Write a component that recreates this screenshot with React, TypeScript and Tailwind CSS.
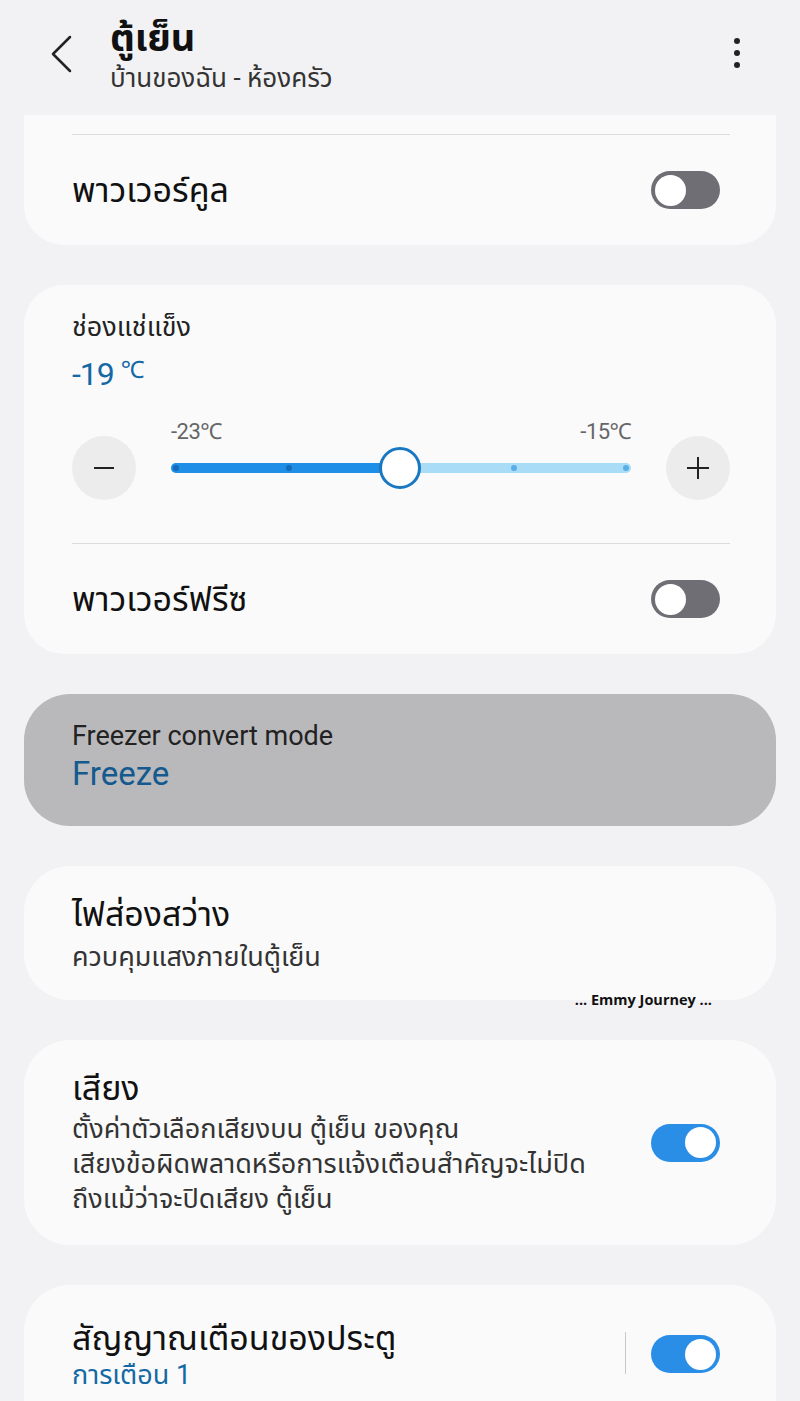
import React from "react";

const font = { fontFamily: '"Roboto", "Noto Sans", "Noto Sans Thai", "DejaVu Sans", sans-serif' };

function Toggle({ on }: { on: boolean }) {
  return on ? (
    <div className="w-[69px] h-[38px] rounded-full bg-[#2a8ee6] flex items-center justify-end pr-[4px] shrink-0">
      <div className="w-[31px] h-[31px] rounded-full bg-white" />
    </div>
  ) : (
    <div className="w-[69px] h-[38px] rounded-full bg-[#6e6e74] flex items-center justify-start pl-[4px] shrink-0">
      <div className="w-[31px] h-[31px] rounded-full bg-white" />
    </div>
  );
}

function Slider() {
  return (
    <div className="flex items-center gap-[35px]">
      <div className="w-[64px] h-[64px] rounded-full bg-[#ececed] flex items-center justify-center shrink-0">
        <div className="w-[20px] h-[2px] bg-[#222]" />
      </div>
      <div className="flex-1 flex flex-col">
        <div className="flex justify-between text-[22px] text-[#666] leading-none -mt-[42px] mb-[20px] tracking-[-0.5px]">
          <span>-23℃</span>
          <span>-15℃</span>
        </div>
        <div className="relative h-[10px] rounded-full bg-[#a9dcf7]">
          <div className="absolute left-0 top-0 h-[10px] w-[230px] rounded-full bg-[#1f8ee6]" />
          <div className="absolute left-[2px] top-[2px] w-[6px] h-[6px] rounded-full bg-[#136cb8]" />
          <div className="absolute left-[115px] top-[2px] w-[6px] h-[6px] rounded-full bg-[#136cb8]" />
          <div className="absolute left-[340px] top-[2px] w-[6px] h-[6px] rounded-full bg-[#5aaee8]" />
          <div className="absolute right-[2px] top-[2px] w-[6px] h-[6px] rounded-full bg-[#5aaee8]" />
          <div className="absolute left-[208px] top-[-16px] w-[42px] h-[42px] rounded-full bg-white border-[3px] border-[#1a78c2]" />
        </div>
      </div>
      <div className="w-[64px] h-[64px] rounded-full bg-[#ececed] flex items-center justify-center shrink-0 relative">
        <div className="absolute w-[22px] h-[2px] bg-[#222]" />
        <div className="absolute w-[2px] h-[22px] bg-[#222]" />
      </div>
    </div>
  );
}

export default function App() {
  return (
    <div className="w-[800px] h-[1401px] bg-[#f2f2f4] overflow-hidden" style={font}>
      {/* header */}
      <div className="h-[115px] flex items-start pl-[48px] pr-[60px] pt-[16px]">
        <svg width="28" height="40" viewBox="0 0 28 40" className="mt-[18px]">
          <path d="M22 3 L5 20 L22 37" stroke="#222" strokeWidth="2.5" fill="none" strokeLinecap="round" strokeLinejoin="round" />
        </svg>
        <div className="ml-[34px] flex flex-col">
          <div className="text-[38px] font-bold text-[#111] leading-[44px]">ตู้เย็น</div>
          <div className="text-[26px] text-[#333] leading-[32px] mt-[2px]">บ้านของฉัน - ห้องครัว</div>
        </div>
        <div className="ml-auto flex flex-col gap-[6px] mt-[22px]">
          <div className="w-[6px] h-[6px] rounded-full bg-[#222]" />
          <div className="w-[6px] h-[6px] rounded-full bg-[#222]" />
          <div className="w-[6px] h-[6px] rounded-full bg-[#222]" />
        </div>
      </div>

      <div className="px-[24px] flex flex-col gap-[40px]">
        {/* card 1 */}
        <div className="bg-[#fafafb] rounded-b-[40px] pl-[48px] pr-[56px] pt-[19px]">
          <div className="h-px bg-[#dcdcde] mr-[-10px]" />
          <div className="flex items-center justify-between h-[110px]">
            <div className="text-[34px] text-[#111] leading-[44px]">พาวเวอร์คูล</div>
            <Toggle on={false} />
          </div>
        </div>

        {/* card 2 */}
        <div className="bg-[#fafafb] rounded-[40px] pl-[48px] pr-[46px] pt-[26px]">
          <div className="text-[27px] text-[#222] leading-[32px]">ช่องแช่แข็ง</div>
          <div className="text-[32px] text-[#1469a4] leading-[36px] mt-[13px] tracking-[-1px]">-19 <span className="text-[24px] align-top leading-[28px]">℃</span></div>
          <div className="mt-[44px]"><Slider /></div>
          <div className="h-px bg-[#dcdcde] mt-[43px]" />
          <div className="flex items-center justify-between h-[110px] pr-[10px]">
            <div className="text-[34px] text-[#111] leading-[44px]">พาวเวอร์ฟรีซ</div>
            <Toggle on={false} />
          </div>
        </div>

        {/* card 3 */}
        <div className="bg-[#b9b9bb] rounded-[46px] px-[48px] pt-[26px] h-[132px]">
          <div className="text-[27px] text-[#222] leading-[32px]">Freezer convert mode</div>
          <div className="text-[33px] text-[#155a8e] leading-[44px]">Freeze</div>
        </div>

        {/* card 4 */}
        <div className="relative bg-[#fafafb] rounded-[46px] px-[48px] pt-[26px] h-[134px]">
          <div className="text-[34px] text-[#111] leading-[44px]">ไฟส่องสว่าง</div>
          <div className="text-[27px] text-[#333] leading-[34px] mt-[4px]">ควบคุมแสงภายในตู้เย็น</div>
          <div className="absolute right-[64px] bottom-[-9px] text-[14.5px] leading-[18px] font-bold text-[#111]" style={{ fontFamily: '"Open Sans", sans-serif' }}>... Emmy Journey ...</div>
        </div>

        {/* card 5 */}
        <div className="bg-[#fafafb] rounded-[46px] pl-[48px] pr-[56px] h-[205px] flex items-center">
          <div className="flex-1 self-start pt-[26px]">
            <div className="text-[34px] text-[#111] leading-[44px]">เสียง</div>
            <div className="text-[27px] text-[#333] leading-[35px] mt-[2px]">
              ตั้งค่าตัวเลือกเสียงบน ตู้เย็น ของคุณ<br />
              เสียงข้อผิดพลาดหรือการแจ้งเตือนสำคัญจะไม่ปิด<br />
              ถึงแม้ว่าจะปิดเสียง ตู้เย็น
            </div>
          </div>
          <Toggle on={true} />
        </div>

        {/* card 6 */}
        <div className="bg-[#fafafb] rounded-t-[46px] pl-[48px] pr-[56px] pt-[31px] h-[140px] flex items-start">
          <div className="flex-1">
            <div className="text-[34px] text-[#111] leading-[44px]">สัญญาณเตือนของประตู</div>
            <div className="text-[27px] text-[#1469a4] leading-[30px]">การเตือน 1</div>
          </div>
          <div className="w-px h-[42px] bg-[#c8c8cc] mt-[16px] mr-[25px]" />
          <div className="mt-[19px]"><Toggle on={true} /></div>
        </div>
      </div>
    </div>
  );
}
